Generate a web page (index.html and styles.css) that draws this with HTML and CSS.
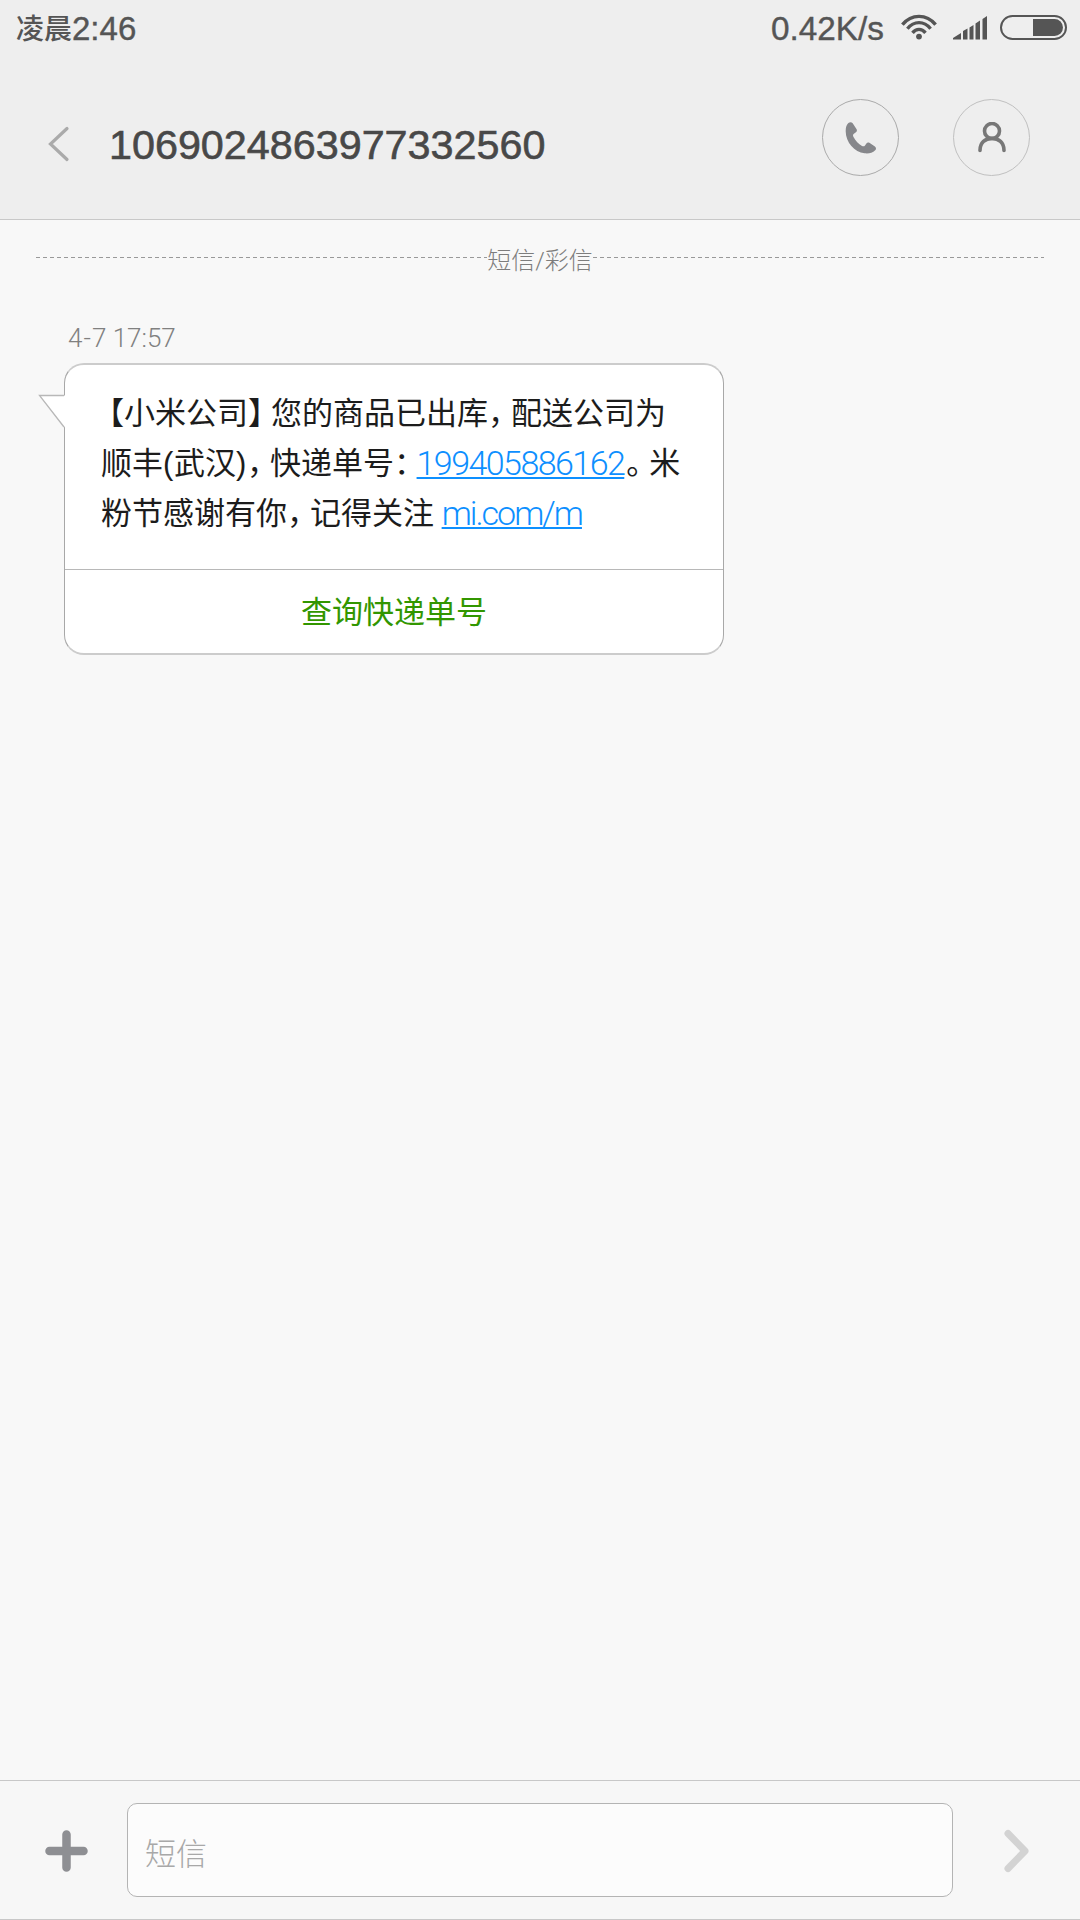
FILE: index.html
```html
<!DOCTYPE html>
<html lang="zh-CN">
<head>
    <meta charset="UTF-8">
    <meta name="viewport" content="width=device-width, initial-scale=1.0">
    <title>短信</title>
    <link rel="stylesheet" href="styles.css">
</head>
<body>
    <header class="header">
        <div class="status-bar">
            <div class="clock"><span class="period">凌晨</span>2:46</div>
            <div class="status-right">
                <span class="speed">0.42K/s</span>
                <svg class="wifi" width="36" height="26" viewBox="0 0 36 26">
                    <g fill="none" stroke="#555" stroke-width="3.4">
                        <path d="M1.4 10.6C10.5-.4 25.5-.4 34.6 10.6"/>
                        <path d="M6.4 14.7C13 6.6 23 6.6 29.6 14.7"/>
                        <path d="M11.5 18.8C15.3 14.2 20.7 14.2 24.5 18.8"/>
                    </g>
                    <circle cx="18" cy="22.6" r="2.9" fill="#555"/>
                </svg>
                <svg class="signal" width="34" height="24" viewBox="0 0 34 24" fill="#555">
                    <path d="M0 23.5V22l8-5v6.5zM10 23.5V15l4.500-2.500v11zM16.500 23.500V11.500L20.500 9v14.500zM22.500 23.500V7.500L27 4.500v19zM29.500 23.500V3L34 0v23.500z"/>
                </svg>
                <div class="battery"><div class="battery-level"></div></div>
            </div>
        </div>

        <div class="title-bar">
            <svg class="back" width="22" height="36" viewBox="0 0 22 36">
                <path d="M19 2.500L2.500 18L19 33.500" fill="none" stroke="#aaa" stroke-width="3.200" stroke-linecap="round"/>
            </svg>
            <h1>1069024863977332560</h1>
            <div class="actions">
                <a class="round-button">
                    <svg width="32" height="32" viewBox="0 0 32 32">
                        <path d="M3.400 1C5-.2 6.700.1 7.700 1.300L11.600 7.300C12.200 8.500 11.900 9.500 10.900 10.300L8.900 11.700C7.700 12.700 7.800 13.700 8.500 15C10.600 19 13.500 21.900 17 23.900C18.200 24.600 19.200 24.500 20 23.400L21.400 21.400C22.200 20.400 23.200 20.200 24.400 20.800L29.900 24.500C31.200 25.500 31.400 27 30.200 28.300C27.500 31 24 31.700 19.500 31.300C9.500 30 .8 20.500.7 9.500C.6 6 1.400 2.800 3.400 1z" fill="#86878b"/>
                    </svg>
                </a>
                <a class="round-button light">
                    <svg width="32" height="32" viewBox="0 0 32 32">
                        <g fill="none" stroke="#777" stroke-width="3.600" stroke-linecap="round">
                            <circle cx="16" cy="9" r="7.500"/>
                            <path d="M4 28.400C4 20.500 9.300 16.400 16 16.400S28 20.500 28 28.400"/>
                        </g>
                    </svg>
                </a>
            </div>
        </div>
    </header>

    <main class="messages">
        <div class="divider"><span>短信/彩信</span></div>
        <p class="time">4<span class="dash">-</span>7 17:57</p>

        <div class="bubble">
            <svg class="tail" width="28" height="36" viewBox="0 0 28 36">
                <path d="M28 2.500H3L28 34.500z" fill="#fff"/>
                <path d="M27 2.500H2.500L27 34" fill="none" stroke="#b8b8b8" stroke-width="1.300"/>
            </svg>
            <div class="bubble-text">
                <div><span class="open">【</span>小米公司<span class="punc">】</span>您的商品已出库<span class="punc">，</span>配送公司为</div>
                <div>顺丰<span class="paren">(</span>武汉<span class="paren">)</span><span class="punc">，</span>快递单号<span class="colon">：</span><a href="#">199405886162</a><span class="punc stop">。</span>米</div>
                <div>粉节感谢有你<span class="punc">，</span>记得关注 <a href="#" class="site">mi.com/m</a></div>
            </div>
            <div class="bubble-action">查询快递单号</div>
        </div>
    </main>

    <footer class="compose">
        <svg class="plus" width="44" height="44" viewBox="0 0 44 44">
            <path d="M5.500 22H39.500M22.500 5.500V38.500" stroke="#8e8f93" stroke-width="8.500" stroke-linecap="round"/>
        </svg>
        <div class="input">短信</div>
        <svg class="send" width="26" height="44" viewBox="0 0 26 44">
            <path d="M5 4.500L22 22L5 39.500" fill="none" stroke="#d3d3d3" stroke-width="7" stroke-linecap="round" stroke-linejoin="round"/>
        </svg>
    </footer>
</body>
</html>
```
FILE: styles.css
```css
* {
    box-sizing: border-box;
}

body {
    margin: 0;
    height: 1920px;
    display: flex;
    flex-direction: column;
    background-color: #f8f8f8;
    color: #1c1c1c;
    font-family: "Liberation Sans", "Noto Sans CJK SC", sans-serif;
}

.header {
    height: 220px;
    background-color: #eee;
    border-bottom: 1px solid #c8c8c8;
}

/* Status bar */
.status-bar {
    height: 56px;
    padding: 0 13px 0 16px;
    display: flex;
    justify-content: space-between;
    color: #555;
    font-size: 33px;
    line-height: 58px;
    -webkit-text-stroke: 0.4px #555;
}

.clock {
    display: flex;
}

.period {
    font-size: 28px;
    font-weight: 500;
    line-height: 59px;
    -webkit-text-stroke: 0;
}

.status-right {
    display: flex;
}

.speed {
    width: 115px;
    font-size: 33.3px;
    white-space: nowrap;
}

.wifi {
    margin: 14px 0 0 15px;
}

.signal {
    margin: 16px 0 0 16px;
}

.battery {
    width: 67px;
    height: 25px;
    margin: 15px 0 0 13px;
    padding: 2px;
    display: flex;
    justify-content: flex-end;
    border: 2px solid #555;
    border-radius: 13px;
}

.battery-level {
    width: 30px;
    background-color: #555;
    border-radius: 0 9px 9px 0;
}

/* Title bar */
.title-bar {
    height: 163px;
    padding: 0 50px 0 48px;
    display: flex;
    align-items: flex-start;
}

.back {
    margin-top: 70px;
}

h1 {
    margin: 64px 0 0 39px;
    color: #484848;
    font-size: 41.3px;
    font-weight: normal;
    line-height: 50px;
    -webkit-text-stroke: 0.6px #484848;
}

.actions {
    margin: 43px 0 0 auto;
    display: flex;
    gap: 54px;
}

.round-button {
    width: 77px;
    height: 77px;
    display: flex;
    align-items: center;
    justify-content: center;
    border: 1px solid #aaa;
    border-radius: 50%;
}

.round-button.light {
    border-color: #c0c0c0;
}

/* Messages */
.messages {
    flex: 1;
}

.divider {
    height: 74px;
    margin: 0 36px;
    display: flex;
    align-items: center;
    color: #7d7d7d;
    font-family: Roboto, "Noto Sans CJK SC", sans-serif;
    font-size: 24px;
    font-weight: 300;
}

.divider span {
    padding-top: 2px;
}

.divider::before,
.divider::after {
    content: "";
    flex: 1;
    height: 1px;
    background: repeating-linear-gradient(to right, #999 0 4px, transparent 4px 7px);
}

.time {
    margin: 28px 0 0 68px;
    height: 41px;
    color: #808080;
    font-family: Roboto, sans-serif;
    font-size: 26px;
    font-weight: 300;
    line-height: 33px;
}

.dash {
    margin: 0 1px;
}

.bubble {
    position: relative;
    width: 660px;
    height: 292px;
    margin-left: 64px;
    background-color: #fff;
    border: 1px solid #a8a8a8;
    border-width: 2px 1px;
    border-top-color: #ccc;
    border-bottom-color: #ccc;
    border-radius: 20px;
}

.tail {
    position: absolute;
    left: -28px;
    top: 28px;
}

.bubble-text {
    height: 204px;
    padding: 24px 0 0 36px;
    font-size: 31px;
    line-height: 50px;
    white-space: nowrap;
}

.open {
    margin-left: -8px;
}

.punc {
    letter-spacing: -8px;
}

.stop {
    margin-left: 2px;
}

.paren {
    letter-spacing: 0.7px;
}

.colon {
    letter-spacing: -8.5px;
}

.bubble-text a {
    position: relative;
    top: 1px;
    color: #0d8fff;
    font-family: Roboto, sans-serif;
    font-size: 34px;
    font-weight: 300;
    letter-spacing: -1.55px;
    line-height: 1;
    text-decoration-thickness: 2px;
    text-underline-offset: 2px;
}

.bubble-text .site {
    margin-left: -1px;
    letter-spacing: -2px;
}

.bubble-action {
    height: 84px;
    border-top: 1px solid #b8b8b8;
    color: #329600;
    font-size: 31px;
    line-height: 86px;
    text-align: center;
}

/* Compose bar */
.compose {
    height: 140px;
    padding: 0 50px 0 44px;
    display: flex;
    align-items: center;
    background-color: #f7f7f7;
    border-top: 1px solid #c8c8c8;
    border-bottom: 1px solid #c8c8c8;
}

.plus,
.send {
    margin-top: 1px;
}

.input {
    width: 826px;
    height: 94px;
    margin: 0 50px 0 39px;
    padding-left: 17px;
    background-color: #fcfcfc;
    border: 1px solid #b4b4b4;
    border-radius: 10px;
    color: #a8a8a8;
    font-size: 31px;
    font-weight: 300;
    line-height: 101px;
}
```
